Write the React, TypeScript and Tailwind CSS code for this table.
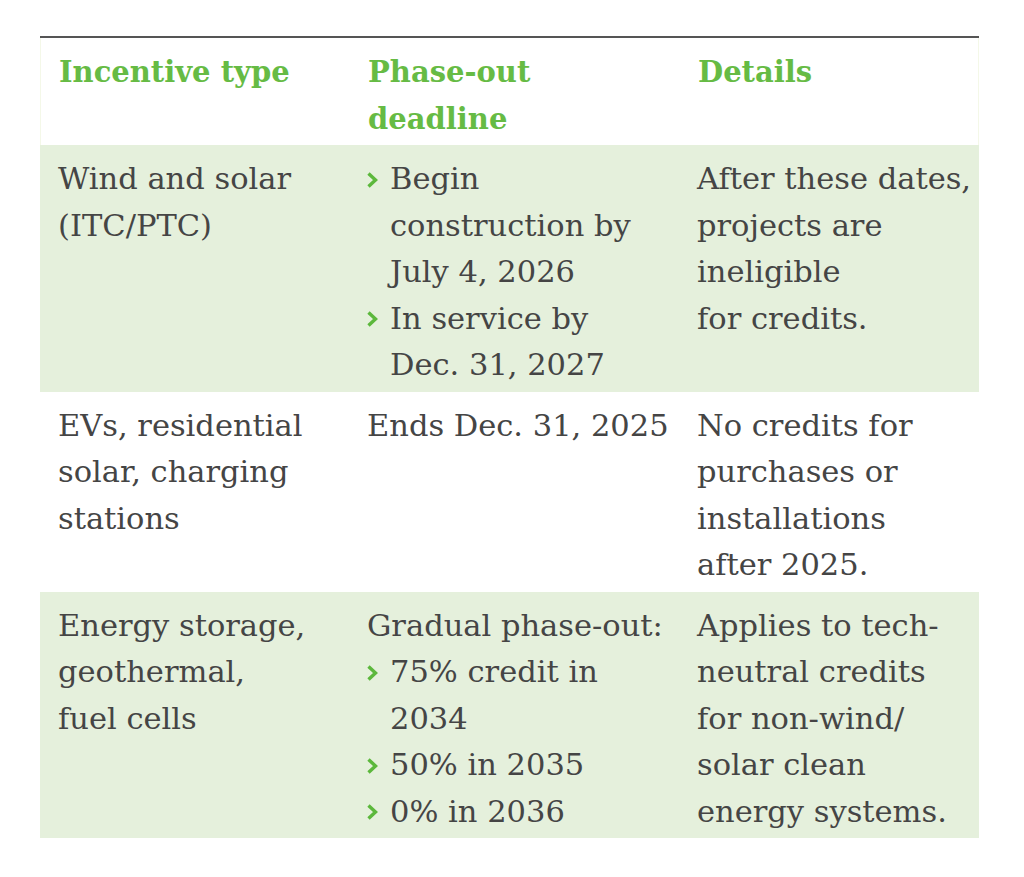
import React from 'react';

const Chevron: React.FC = () => (
  <svg width="13" height="18" viewBox="0 0 13 18" className="shrink-0">
    <polyline points="1.5,2.5 8.5,9 1.5,15.5" fill="none" stroke="#5cb83c" strokeWidth="3.4" strokeLinecap="butt" strokeLinejoin="miter" />
  </svg>
);

type Bullet = { lines: string[] };

const Lines: React.FC<{ lines: string[] }> = ({ lines }) => (
  <>
    {lines.map((l, i) => (
      <div key={i} className="whitespace-nowrap">{l}</div>
    ))}
  </>
);

const Bullets: React.FC<{ items: Bullet[] }> = ({ items }) => (
  <>
    {items.map((b, i) => (
      <div key={i} className="flex">
        <div className="w-[23px] h-[46.5px] flex items-center pt-[1px]">
          <Chevron />
        </div>
        <div>
          <Lines lines={b.lines} />
        </div>
      </div>
    ))}
  </>
);

type Row = {
  type: string[];
  lead?: string[];
  bullets?: Bullet[];
  details: string[];
  green: boolean;
};

const ROWS: Row[] = [
  {
    type: ['Wind and solar', '(ITC/PTC)'],
    bullets: [
      { lines: ['Begin', 'construction by', 'July 4, 2026'] },
      { lines: ['In service by', 'Dec. 31, 2027'] },
    ],
    details: ['After these dates,', 'projects are', 'ineligible', 'for credits.'],
    green: true,
  },
  {
    type: ['EVs, residential', 'solar, charging', 'stations'],
    lead: ['Ends Dec. 31, 2025'],
    details: ['No credits for', 'purchases or', 'installations', 'after 2025.'],
    green: false,
  },
  {
    type: ['Energy storage,', 'geothermal,', 'fuel cells'],
    lead: ['Gradual phase-out:'],
    bullets: [
      { lines: ['75% credit in', '2034'] },
      { lines: ['50% in 2035'] },
      { lines: ['0% in 2036'] },
    ],
    details: ['Applies to tech-', 'neutral credits', 'for non-wind/', 'solar clean', 'energy systems.'],
    green: true,
  },
];

export default function App() {
  return (
    <div className="w-[1024px] h-[877px] bg-white pt-[36px] pl-[40px]" style={{ fontFamily: '"DejaVu Serif", serif' }}>
      <div className="w-[939px] border-t-2 border-[#555555]">
        <div className="grid grid-cols-[309px_330px_300px] bg-white border-x border-[#f4f8e8] text-[#66bb44] font-bold text-[29px] leading-[46.5px] pt-[11px] pb-[3px] h-[107px]">
          <div className="pl-[18px]">Incentive type</div>
          <div className="pl-[18px]">
            <div>Phase-out</div>
            <div>deadline</div>
          </div>
          <div className="pl-[18px]">Details</div>
        </div>
        {ROWS.map((r, i) => (
          <div
            key={i}
            className={`grid grid-cols-[309px_330px_300px] text-[#454545] text-[30.5px] leading-[46.5px] pt-[11px] pb-[3px] ${r.green ? 'bg-[#e5f0dc]' : 'bg-white'}`}
          >
            <div className="pl-[18px]">
              <Lines lines={r.type} />
            </div>
            <div className="pl-[18px]">
              {r.lead && <Lines lines={r.lead} />}
              {r.bullets && <Bullets items={r.bullets} />}
            </div>
            <div className="pl-[18px]">
              <Lines lines={r.details} />
            </div>
          </div>
        ))}
      </div>
    </div>
  );
}
